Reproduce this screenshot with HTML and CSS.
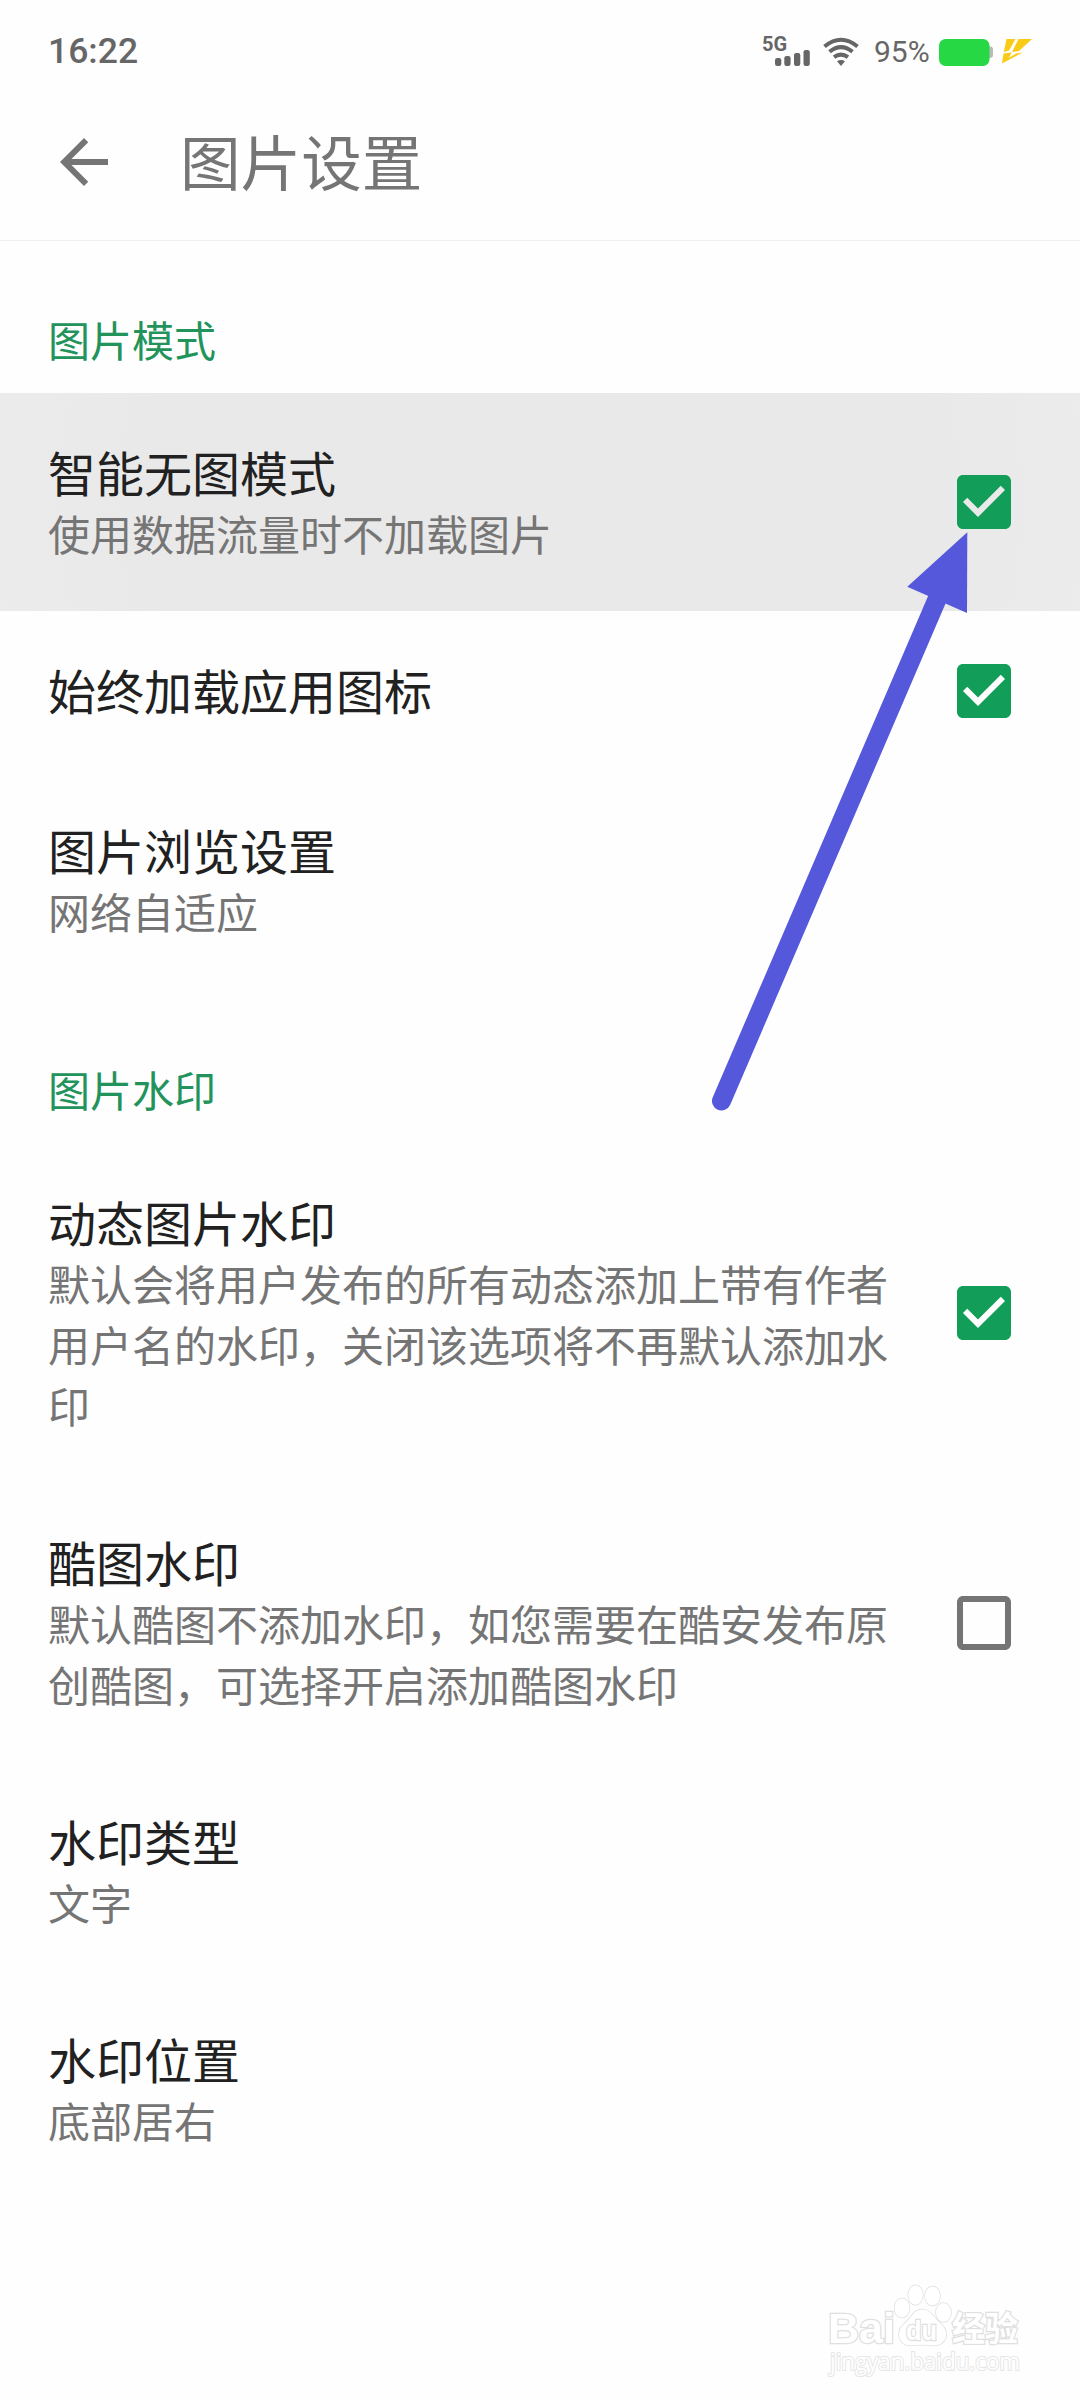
FILE: index.html
```html
<!DOCTYPE html>
<html lang="zh-CN">
<head>
<meta charset="utf-8">
<title>图片设置</title>
<link rel="stylesheet" href="styles.css">
</head>
<body>
<svg class="defs" aria-hidden="true">
  <symbol id="box-on" viewBox="0 0 24 24"><path fill-rule="evenodd" d="M19 3H5c-1.100 0-2 .9-2 2v14c0 1.100.9 2 2 2h14c1.100 0 2-.9 2-2V5c0-1.100-.9-2-2-2zM10 17l-5-5 1.410-1.410L10 14.170l7.590-7.590L19 8l-9 9z"/></symbol>
  <symbol id="box-off" viewBox="0 0 24 24"><path d="M19 5v14H5V5h14m0-2H5c-1.100 0-2 .9-2 2v14c0 1.100.9 2 2 2h14c1.100 0 2-.9 2-2V5c0-1.100-.9-2-2-2z"/></symbol>
</svg>
<div class="screen">
  <div class="status">
    <span class="clock">16:22</span>
    <svg class="signal" width="50" height="40" viewBox="761 29 50 40">
      <text class="net" x="762" y="50.500">5G</text>
      <rect x="775" y="58" width="6.300" height="8" rx="2.200"/>
      <rect x="784.300" y="56" width="6.300" height="10" rx="2.200"/>
      <rect x="794" y="53" width="6.300" height="13" rx="2.200"/>
      <rect x="803.500" y="50" width="6.300" height="16" rx="2.200"/>
    </svg>
    <svg class="wifi" width="36" height="30" viewBox="823 37 36 30">
      <g class="waves">
        <path d="M824.500 46.500Q841 33 857.500 46.500"/>
        <path d="M829.500 51.800Q841 42.500 852.500 51.800"/>
        <path d="M834 57.200Q841 52 848 57.200"/>
      </g>
      <path d="M837 61.300Q841 58.800 845 61.300L841 66Z"/>
    </svg>
    <span class="percent">95%</span>
    <svg class="battery" width="54" height="28" viewBox="939 39 54 28">
      <path class="cap" d="M988 46.500h2q3 0 3 3v5.500q0 3-3 3h-2z"/>
      <rect class="charge" x="939" y="39" width="50.500" height="27" rx="6.500"/>
    </svg>
    <svg class="bolt" width="31" height="27" viewBox="1002 38 31 27">
      <path d="M1006.500 39H1015.500L1009 50.500L1003.800 52Z"/>
      <path d="M1018.500 39H1032L1019 51L1012 52Z"/>
      <path d="M1003.500 53.500L1012 52.500L1008.500 58L1016 53.500L1022.500 52.500L1002 63.500Z"/>
    </svg>
  </div>
  <header class="toolbar">
    <svg class="back" viewBox="0 0 24 24"><path d="M20 11H7.830l5.590-5.590L12 4l-8 8 8 8 1.410-1.410L7.830 13H20v-2z"/></svg>
    <h1>图片设置</h1>
  </header>
  <main>
    <h2>图片模式</h2>
    <div class="row pressed">
      <div class="copy"><div class="title">智能无图模式</div><div class="note">使用数据流量时不加载图片</div></div>
      <svg class="check on"><use href="#box-on"/></svg>
    </div>
    <div class="row">
      <div class="copy single"><div class="title">始终加载应用图标</div></div>
      <svg class="check on"><use href="#box-on"/></svg>
    </div>
    <div class="row">
      <div class="copy"><div class="title">图片浏览设置</div><div class="note">网络自适应</div></div>
    </div>
    <h2>图片水印</h2>
    <div class="row">
      <div class="copy"><div class="title">动态图片水印</div><div class="note">默认会将用户发布的所有动态添加上带有作者用户名的水印，关闭该选项将不再默认添加水印</div></div>
      <svg class="check on"><use href="#box-on"/></svg>
    </div>
    <div class="row">
      <div class="copy"><div class="title">酷图水印</div><div class="note">默认酷图不添加水印，如您需要在酷安发布原创酷图，可选择开启添加酷图水印</div></div>
      <svg class="check"><use href="#box-off"/></svg>
    </div>
    <div class="row">
      <div class="copy"><div class="title">水印类型</div><div class="note">文字</div></div>
    </div>
    <div class="row">
      <div class="copy"><div class="title">水印位置</div><div class="note">底部居右</div></div>
    </div>
  </main>
  <svg class="pointer" width="260" height="590" viewBox="710 530 260 590">
    <path class="shaft" d="M721.500 1101L938 597"/>
    <path class="head" d="M967.300 532.300L907.300 586.700L967 613Z"/>
  </svg>
  <svg class="watermark" width="220" height="110" viewBox="815 2275 220 110">
    <text class="brand" x="828" y="2343" textLength="67" lengthAdjust="spacingAndGlyphs">Bai</text>
    <ellipse cx="902" cy="2308" rx="7.500" ry="9.500"/>
    <ellipse cx="915.500" cy="2295" rx="7.300" ry="9.800"/>
    <ellipse cx="932.500" cy="2296" rx="7.500" ry="9.500"/>
    <ellipse cx="943.500" cy="2312.500" rx="7.500" ry="9.500"/>
    <path d="M922 2309.500C913 2309.500 912 2318 903 2325C895 2333 900 2346 911 2345.500C918 2344.500 926 2344.500 933 2345.500C946 2346 950 2333 942 2325C933 2317 931 2309.500 922 2309.500Z"/>
    <text class="du" x="906" y="2340" textLength="31" lengthAdjust="spacingAndGlyphs">du</text>
    <text class="cn" x="952" y="2341" textLength="66" lengthAdjust="spacingAndGlyphs">经验</text>
    <text class="url" x="830" y="2370" textLength="190" lengthAdjust="spacingAndGlyphs">jingyan.baidu.com</text>
  </svg>
</div>
</body>
</html>
```
FILE: styles.css
```css
* { box-sizing: border-box; }
body {
  margin: 0;
  background: #fefefe;
  color: #212121;
  font-family: "Noto Sans CJK SC", sans-serif;
}
.defs { display: none; }
.screen {
  position: relative;
  width: 1080px;
  height: 2400px;
  overflow: hidden;
}
.status {
  display: flex;
  align-items: flex-start;
  height: 84px;
  padding: 0 47px 0 48px;
  color: #666;
  font-family: Roboto, sans-serif;
}
.status svg { fill: #666; flex: none; }
.clock {
  flex: 1;
  font-size: 35.5px;
  font-weight: 500;
  line-height: 42px;
  margin-top: 30px;
}
.signal { margin: 29px 12px 0 0; }
.net { font: 700 20px Roboto, sans-serif; }
.wifi { margin: 37px 15px 0 0; }
.waves { fill: none; stroke: #666; stroke-width: 4; }
.percent {
  width: 65px;
  font-size: 30px;
  line-height: 36px;
  margin-top: 34px;
}
.battery { margin: 39px 9px 0 0; }
.status .cap { fill: #bbb; }
.status .charge { fill: #27d845; }
.status .bolt { margin-top: 38px; fill: #f9cb16; }
.toolbar {
  display: flex;
  align-items: center;
  height: 157px;
  padding-left: 48px;
  border-bottom: 1px solid #eee;
}
.back { width: 72px; height: 72px; fill: #757575; }
h1 {
  margin: -5px 0 0 60px;
  color: #757575;
  font-size: 60.6px;
  font-weight: 400;
  line-height: 84px;
}
h2 {
  margin: 0;
  height: 154px;
  padding: 69px 48px 0;
  color: #21935b;
  font-size: 42px;
  font-weight: 400;
  line-height: 61px;
}
main { margin-top: -2px; }
.row {
  display: flex;
  align-items: center;
  justify-content: space-between;
  min-height: 160px;
  padding: 48px 60px 48px 48px;
}
.pressed { background: radial-gradient(circle 600px, #e9e9e9 65%, #ececec 100%); }
.copy { width: 842px; }
.single { padding-bottom: 4px; }
.title { font-size: 48px; line-height: 60px; }
.note { margin-top: 1px; color: #757575; font-size: 42px; line-height: 61px; }
.check { width: 72px; height: 72px; margin: -10px 0; flex: none; fill: #757575; }
.on { fill: #129d58; }
.pointer { position: absolute; left: 710px; top: 530px; }
.shaft { fill: none; stroke: #5558da; stroke-width: 19; stroke-linecap: round; }
.head { fill: #5558da; }
.watermark {
  position: absolute;
  left: 815px;
  top: 2275px;
  fill: #fff;
  stroke: #e0e0e0;
  stroke-width: 1.5;
  paint-order: stroke;
}
.brand { font: 700 43px "Liberation Sans", sans-serif; stroke-width: 2.5; }
.du { font: 700 28px "Liberation Sans", sans-serif; stroke-width: 2.5; }
.cn { font: 700 34px "Noto Sans CJK SC", sans-serif; stroke-width: 2.5; }
.url { font: 400 23px "Open Sans", sans-serif; stroke: #e6e6e6; stroke-width: 2; }
```
